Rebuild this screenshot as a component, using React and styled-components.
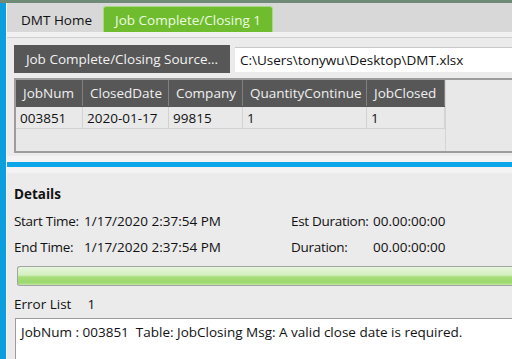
import React from 'react';
import styled, { createGlobalStyle } from 'styled-components';

const GlobalStyle = createGlobalStyle`
  html, body {
    margin: 0;
    padding: 0;
    background: #ebebeb;
  }
  body {
    font-family: "Open Sans", "Noto Sans", sans-serif;
    font-size: 13px;
    color: #111;
  }
`;

const Window = styled.div`
  width: 512px;
  height: 359px;
  overflow: hidden;
  display: flex;
  flex-direction: column;
  border-top: 3px solid #6f8b78;
  box-sizing: border-box;
  background: #ebebeb;
`;

const Body = styled.div`
  flex: 1;
  display: flex;
  border-left: 6px solid #0d9ede;
  min-height: 0;
`;

const Main = styled.div`
  flex: 1;
  display: flex;
  flex-direction: column;
  border-left: 1px solid #f4f4f4;
  min-width: 0;
`;

const TabStrip = styled.div`
  height: 29px;
  background: #d8d8d8;
  display: flex;
  align-items: flex-end;
  padding-left: 5px;
`;

const Tab = styled.div`
  height: ${p => (p.active ? '26px' : '25px')};
  box-sizing: border-box;
  padding: 0 ${p => (p.active ? '11px' : '8px')};
  margin-right: ${p => (p.active ? '0' : '2px')};
  display: flex;
  align-items: center;
  font-size: 13.5px;
  white-space: nowrap;
  color: ${p => (p.active ? '#eefbe0' : '#111')};
  background: ${p => (p.active ? '#6fbd2e' : 'transparent')};
  border: 1px solid ${p => (p.active ? '#a8d882' : 'transparent')};
  border-bottom: none;
  border-radius: 3px 3px 0 0;
`;

const TabPage = styled.div`
  background: #f1f1f1;
  padding-top: 5px;
`;

const SourceRow = styled.div`
  display: flex;
  align-items: center;
  padding: 7px 0 0 7px;
  background: #ebebeb;
  border-top: 1px solid #d0d0d0;
`;

const SourceButton = styled.div`
  width: 216px;
  height: 28px;
  background: #575757;
  color: #f2f2f2;
  font-size: 13.5px;
  display: flex;
  align-items: center;
  justify-content: center;
  white-space: nowrap;
`;

const PathBox = styled.div`
  flex: 1;
  margin-left: 5px;
  height: 24px;
  background: #fff;
  border-top: 1px solid #c8c8c8;
  display: flex;
  align-items: center;
  padding-left: 5px;
  font-size: 13.5px;
  white-space: nowrap;
`;

const GridWrap = styled.div`
  background: #ebebeb;
  padding: 5px 0 0 7px;
`;

const Grid = styled.div`
  height: 71px;
  border: 2px solid #9c9c9c;
  border-right: none;
  display: flex;
  background: #e8e8e8;
`;

const Columns = styled.div`
  width: 429px;
  border-right: 1px solid #d4d4d4;
`;

const Row = styled.div`
  display: grid;
  grid-template-columns: 67px 86px 74px 124px 78px;
  height: ${p => (p.head ? '26px' : '21px')};
  background: ${p => (p.head ? '#575757' : '#e9e9e9')};
  border-bottom: 1px solid ${p => (p.head ? '#575757' : '#d2d2d2')};
`;

const Cell = styled.div`
  display: flex;
  align-items: center;
  padding-left: ${p => (p.head ? '7px' : '4px')};
  font-size: 13.5px;
  white-space: nowrap;
  overflow: hidden;
  color: ${p => (p.head ? '#f0f0f0' : '#111')};
  border-right: 1px solid ${p => (p.head ? '#808080' : '#d2d2d2')};
`;

const Splitter = styled.div`
  height: 23px;
  background: #ebebeb;
  display: flex;
  flex-direction: column;
  justify-content: center;
  &::before,
  &::after {
    content: '';
    display: block;
    height: 6px;
    background: #f3f3f3;
  }
`;

const BlueLine = styled.div`
  height: 5px;
  background: #0aa6e9;
`;

const Details = styled.div`
  flex: 1;
  display: flex;
  flex-direction: column;
  padding: 8px 0 0 7px;
  min-height: 0;
`;

const Title = styled.div`
  font-weight: 700;
  font-size: 13.5px;
  height: 20px;
  line-height: 20px;
`;

const InfoGrid = styled.div`
  display: grid;
  grid-template-columns: 70px 207px 82px auto;
  grid-auto-rows: 26px;
  align-items: center;
  margin-top: 4px;
  font-size: 13.5px;
  white-space: nowrap;
`;

const Label = styled.span`
  letter-spacing: -0.3px;
`;

const Progress = styled.div`
  margin: 6px 0 0 3px;
  height: 18px;
  border: 1px solid #a4a4a4;
  border-right: none;
  border-radius: 3px 0 0 3px;
  background: linear-gradient(
    to bottom,
    #e6f6dc 0%,
    #d4efbf 45%,
    #a9dd7c 55%,
    #9ad86c 85%,
    #c2e6a4 100%
  );
`;

const ErrorHeader = styled.div`
  display: flex;
  align-items: center;
  height: 22px;
  margin-top: 7px;
  font-size: 13.5px;
`;

const ErrorCount = styled.span`
  margin-left: 16px;
`;

const ErrorBox = styled.div`
  flex: 1;
  margin: 3px 0 0 1px;
  background: #fff;
  border: 1px solid #9c9c9c;
  border-right: none;
  border-bottom: none;
  padding: 4px 0 0 5px;
  font-size: 13.5px;
  white-space: nowrap;
`;

const columns = ['JobNum', 'ClosedDate', 'Company', 'QuantityContinue', 'JobClosed'];
const rows = [['003851', '2020-01-17', '99815', '1', '1']];

export default function App() {
  return (
    <Window>
      <GlobalStyle />
      <Body>
        <Main>
          <TabStrip>
            <Tab>DMT Home</Tab>
            <Tab active>Job Complete/Closing 1</Tab>
          </TabStrip>
          <TabPage>
            <SourceRow>
              <SourceButton>Job Complete/Closing Source...</SourceButton>
              <PathBox>C:\Users\tonywu\Desktop\DMT.xlsx</PathBox>
            </SourceRow>
            <GridWrap>
              <Grid>
                <Columns>
                  <Row head>
                    {columns.map(c => (
                      <Cell head key={c}>{c}</Cell>
                    ))}
                  </Row>
                  {rows.map((r, i) => (
                    <Row key={i}>
                      {r.map((v, j) => (
                        <Cell key={j}>{v}</Cell>
                      ))}
                    </Row>
                  ))}
                </Columns>
              </Grid>
            </GridWrap>
          </TabPage>
          <Splitter>
            <BlueLine />
          </Splitter>
          <Details>
            <Title>Details</Title>
            <InfoGrid>
              <Label>Start Time:</Label>
              <span>1/17/2020 2:37:54 PM</span>
              <Label>Est Duration:</Label>
              <span>00.00:00:00</span>
              <Label>End Time:</Label>
              <span>1/17/2020 2:37:54 PM</span>
              <Label>Duration:</Label>
              <span>00.00:00:00</span>
            </InfoGrid>
            <Progress />
            <ErrorHeader>
              Error List<ErrorCount>1</ErrorCount>
            </ErrorHeader>
            <ErrorBox>
              JobNum : 003851&nbsp; Table: JobClosing Msg: A valid close date is required.
            </ErrorBox>
          </Details>
        </Main>
      </Body>
    </Window>
  );
}
